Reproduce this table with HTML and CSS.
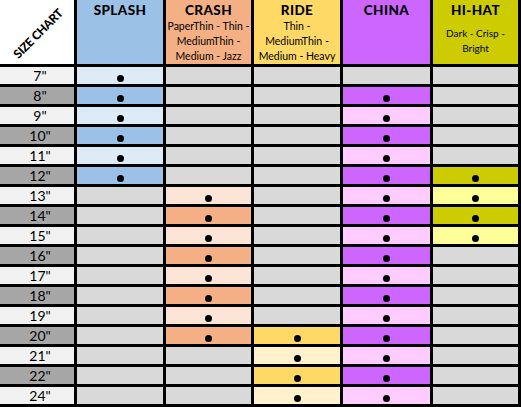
FILE: index.html
```html
<!DOCTYPE html>
<html>
<head>
<meta charset="utf-8">
<link rel="stylesheet" href="styles.css">
</head>
<body>
<div class="chart">
  <div class="hd hd-size"><span class="diag">SIZE CHART</span></div>
  <div class="hd sp"><div class="t">SPLASH</div></div>
  <div class="hd cr"><div class="t">CRASH</div><div class="sub">PaperThin - Thin -<br>MediumThin -<br>Medium - Jazz</div></div>
  <div class="hd ri"><div class="t">RIDE</div><div class="sub">Thin -<br>MediumThin -<br>Medium - Heavy</div></div>
  <div class="hd ch"><div class="t">CHINA</div></div>
  <div class="hd hh"><div class="t">HI-HAT</div><div class="sub small">Dark - Crisp -<br>Bright</div></div>

  <div class="lab lt">7"</div><div class="c sp-l"><i class="dot"></i></div><div class="c e"></div><div class="c e"></div><div class="c e"></div><div class="c e"></div>
  <div class="lab dk">8"</div><div class="c sp-d"><i class="dot"></i></div><div class="c e"></div><div class="c e"></div><div class="c ch-d"><i class="dot"></i></div><div class="c e"></div>
  <div class="lab lt">9"</div><div class="c sp-l"><i class="dot"></i></div><div class="c e"></div><div class="c e"></div><div class="c ch-l"><i class="dot"></i></div><div class="c e"></div>
  <div class="lab dk">10"</div><div class="c sp-d"><i class="dot"></i></div><div class="c e"></div><div class="c e"></div><div class="c ch-d"><i class="dot"></i></div><div class="c e"></div>
  <div class="lab lt">11"</div><div class="c sp-l"><i class="dot"></i></div><div class="c e"></div><div class="c e"></div><div class="c ch-l"><i class="dot"></i></div><div class="c e"></div>
  <div class="lab dk">12"</div><div class="c sp-d"><i class="dot"></i></div><div class="c e"></div><div class="c e"></div><div class="c ch-d"><i class="dot"></i></div><div class="c hh-d"><i class="dot"></i></div>
  <div class="lab lt">13"</div><div class="c e"></div><div class="c cr-l"><i class="dot"></i></div><div class="c e"></div><div class="c ch-l"><i class="dot"></i></div><div class="c hh-l"><i class="dot"></i></div>
  <div class="lab dk">14"</div><div class="c e"></div><div class="c cr-d"><i class="dot"></i></div><div class="c e"></div><div class="c ch-d"><i class="dot"></i></div><div class="c hh-d"><i class="dot"></i></div>
  <div class="lab lt">15"</div><div class="c e"></div><div class="c cr-l"><i class="dot"></i></div><div class="c e"></div><div class="c ch-l"><i class="dot"></i></div><div class="c hh-l"><i class="dot"></i></div>
  <div class="lab dk">16"</div><div class="c e"></div><div class="c cr-d"><i class="dot"></i></div><div class="c e"></div><div class="c ch-d"><i class="dot"></i></div><div class="c e"></div>
  <div class="lab lt">17"</div><div class="c e"></div><div class="c cr-l"><i class="dot"></i></div><div class="c e"></div><div class="c ch-l"><i class="dot"></i></div><div class="c e"></div>
  <div class="lab dk">18"</div><div class="c e"></div><div class="c cr-d"><i class="dot"></i></div><div class="c e"></div><div class="c ch-d"><i class="dot"></i></div><div class="c e"></div>
  <div class="lab lt">19"</div><div class="c e"></div><div class="c cr-l"><i class="dot"></i></div><div class="c e"></div><div class="c ch-l"><i class="dot"></i></div><div class="c e"></div>
  <div class="lab dk">20"</div><div class="c e"></div><div class="c cr-d"><i class="dot"></i></div><div class="c ri-d"><i class="dot"></i></div><div class="c ch-d"><i class="dot"></i></div><div class="c e"></div>
  <div class="lab lt">21"</div><div class="c e"></div><div class="c e"></div><div class="c ri-l"><i class="dot"></i></div><div class="c ch-l"><i class="dot"></i></div><div class="c e"></div>
  <div class="lab dk">22"</div><div class="c e"></div><div class="c e"></div><div class="c ri-d"><i class="dot"></i></div><div class="c ch-d"><i class="dot"></i></div><div class="c e"></div>
  <div class="lab lt">24"</div><div class="c e"></div><div class="c e"></div><div class="c ri-l"><i class="dot"></i></div><div class="c ch-l"><i class="dot"></i></div><div class="c e"></div>
</div>
</body>
</html>
```

FILE: styles.css
```css
html, body {
  margin: 0;
  padding: 0;
  background: #ffffff;
}

body {
  font-family: Lato, "Open Sans", sans-serif;
  color: #000;
}

.chart {
  display: grid;
  grid-template-columns: 74px 86px 85px 86px 87px 85px;
  grid-template-rows: 64px repeat(17, 17px);
  gap: 3px;
  padding: 0 3px 3px 0;
  background: #000;
  width: max-content;
}

.hd {
  display: flex;
  flex-direction: column;
  align-items: center;
  text-align: center;
  overflow: hidden;
}

.hd-size {
  background: #ffffff;
  justify-content: center;
}

.diag {
  display: block;
  transform: rotate(-45deg);
  font-weight: 900;
  font-size: 12px;
  letter-spacing: -0.4px;
  white-space: nowrap;
  margin: 3px 0 0 1px;
}

.t {
  font-weight: 900;
  font-size: 13.5px;
  letter-spacing: 0.4px;
  line-height: 18px;
  padding-top: 1px;
}

.sub {
  flex: 1;
  display: flex;
  flex-direction: column;
  justify-content: center;
  font-size: 10.5px;
  line-height: 15px;
  padding-bottom: 1px;
}

.sub.small {
  font-size: 10px;
}

.sp { background: #9bc2e6; }
.cr { background: #f4b084; }
.ri { background: #ffd966; }
.ch { background: #cc66ff; }
.hh { background: #cccc00; }

.lab {
  display: flex;
  align-items: flex-end;
  justify-content: center;
  padding-left: 6px;
  font-size: 14px;
  line-height: 17px;
}

.lt { background: #f2f2f2; }
.dk { background: #a6a6a6; }

.c {
  display: flex;
  align-items: flex-end;
  justify-content: center;
}

.e { background: #d9d9d9; }
.sp-l { background: #ddebf7; }
.sp-d { background: #9bc2e6; }
.cr-l { background: #fce4d6; }
.cr-d { background: #f4b084; }
.ri-l { background: #fff2cc; }
.ri-d { background: #ffd966; }
.ch-l { background: #ffccff; }
.ch-d { background: #cc66ff; }
.hh-l { background: #ffff99; }
.hh-d { background: #cccc00; }

.dot {
  display: block;
  width: 7px;
  height: 7px;
  border-radius: 50%;
  background: #000;
  margin-bottom: 2px;
}
```
